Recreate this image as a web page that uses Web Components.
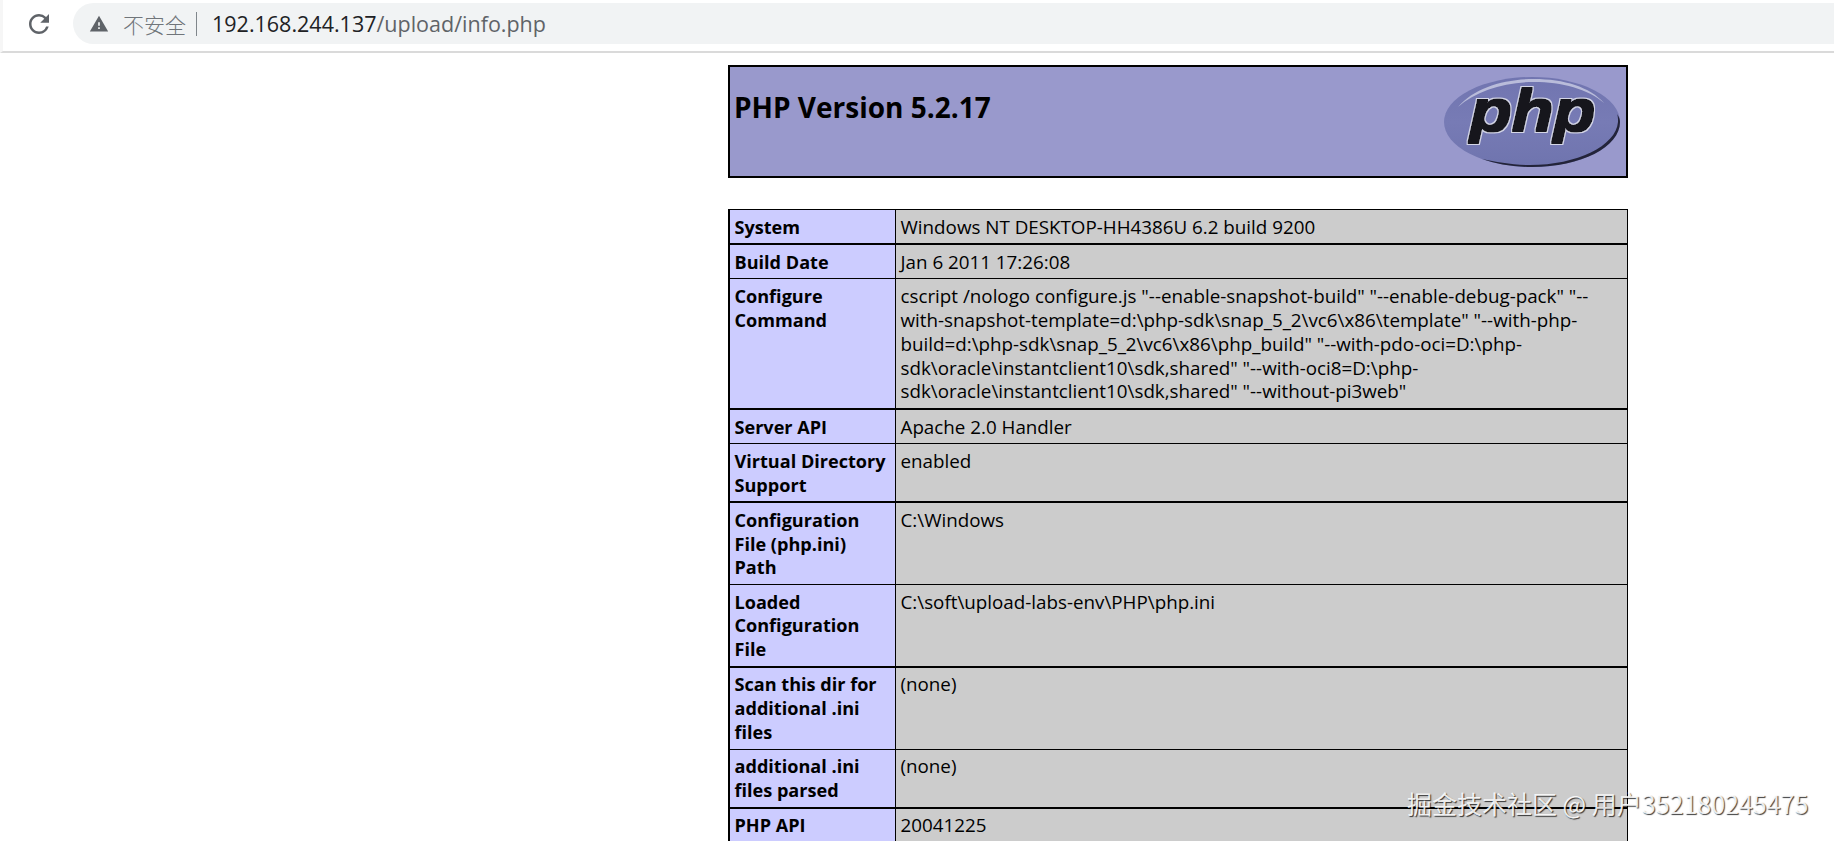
<!DOCTYPE html>
<html lang="zh">
<head>
<meta charset="utf-8">
<title>phpinfo()</title>
<style>
  html, body { margin: 0; height: 100%; overflow: hidden; background: #fff; }
  body { font-family: "Open Sans", "Noto Sans CJK SC", sans-serif; color: #000; }
  .page { padding: 12px 0 0 728px; }
</style>
</head>
<body>
<browser-bar host="192.168.244.137" path="/upload/info.php"></browser-bar>
<div class="page">
  <php-banner version="PHP Version 5.2.17"></php-banner>
  <info-table>
    <info-row label="System" thick>Windows NT DESKTOP-HH4386U 6.2 build 9200</info-row>
    <info-row label="Build Date">Jan 6 2011 17:26:08</info-row>
    <info-row label="Configure Command" thick>cscript /nologo configure.js "--enable-snapshot-build" "--enable-debug-pack" "--with-snapshot-template=d:\php-sdk\snap_5_2\vc6\x86\template" "--with-php-build=d:\php-sdk\snap_5_2\vc6\x86\php_build" "--with-pdo-oci=D:\php-sdk\oracle\instantclient10\sdk,shared" "--with-oci8=D:\php-sdk\oracle\instantclient10\sdk,shared" "--without-pi3web"</info-row>
    <info-row label="Server API">Apache 2.0 Handler</info-row>
    <info-row label="Virtual Directory Support" thick>enabled</info-row>
    <info-row label="Configuration File (php.ini) Path">C:\Windows</info-row>
    <info-row label="Loaded Configuration File" thick>C:\soft\upload-labs-env\PHP\php.ini</info-row>
    <info-row label="Scan this dir for additional .ini files">(none)</info-row>
    <info-row label="additional .ini files parsed" thick>(none)</info-row>
    <info-row label="PHP API">20041225</info-row>
  </info-table>
</div>
<site-watermark>掘金技术社区 @ 用户352180245475</site-watermark>

<script>
class BrowserBar extends HTMLElement {
  constructor() {
    super();
    this.attachShadow({ mode: 'open' });
  }

  connectedCallback() {
    this.shadowRoot.innerHTML = `
      <style>
        :host { display: block; height: 53px; box-sizing: border-box; padding-top: 3px; border-bottom: 2px solid #dadada; border-left: 3px solid #f6f6f6; }
        .row { display: flex; align-items: center; height: 41px; }
        .reload { width: 30px; height: 30px; margin: 0 19px 0 21px; fill: #5f6368; flex: none; }
        .pill { flex: 1; display: flex; align-items: center; height: 100%; background: #f1f3f4; border-radius: 21px 0 0 21px; padding-left: 16px; font: 21.5px "Open Sans", "Noto Sans CJK SC", sans-serif; white-space: nowrap; }
        .warn { width: 20px; height: 20px; fill: #5f6368; flex: none; }
        .label { color: #70757a; margin-left: 14px; font-family: "Noto Sans CJK SC", sans-serif; font-size: 21px; font-weight: 300; }
        .sep { width: 1px; height: 24px; background: #80868b; margin: 0 15px 0 10px; }
        .host { color: #202124; }
        .path { color: #5f6368; }
      </style>
      <div class="row">
        <svg class="reload" viewBox="0 0 24 24"><path d="M17.65 6.35A7.958 7.958 0 0 0 12 4c-4.42 0-7.99 3.58-7.99 8s3.57 8 7.99 8c3.73 0 6.84-2.55 7.73-6h-2.08A5.99 5.99 0 0 1 12 18c-3.31 0-6-2.69-6-6s2.69-6 6-6c1.66 0 3.14.69 4.22 1.78L13 11h7V4l-2.35 2.35z"/></svg>
        <div class="pill">
          <svg class="warn" viewBox="0 0 24 24"><path d="M1 21h22L12 2 1 21zm12-3h-2v-2h2v2zm0-4h-2v-4h2v4z"/></svg>
          <span class="label">不安全</span><span class="sep"></span>
          <span class="host">${this.getAttribute('host')}</span><span class="path">${this.getAttribute('path')}</span>
        </div>
      </div>
    `;
  }
}

class PhpLogo extends HTMLElement {
  constructor() {
    super();
    this.attachShadow({ mode: 'open' });
    this.shadowRoot.innerHTML = `
      <style>
        :host { display: block; width: 180px; height: 94px; }
        svg { display: block; width: 100%; height: 100%; }
        text { font: italic bold 60px "Liberation Sans", sans-serif; fill: #14141c; filter: url(#heavy); }
      </style>
      <svg viewBox="0 0 180 94">
        <defs>
          <linearGradient id="oval" x1="0" y1="0" x2="0" y2="1">
            <stop offset="0" stop-color="#7175b0"/>
            <stop offset=".5" stop-color="#777bb5"/>
            <stop offset="1" stop-color="#6f74ae"/>
          </linearGradient>
          <filter id="heavy" x="-10%" y="-10%" width="120%" height="120%">
            <feMorphology in="SourceGraphic" operator="dilate" radius="0.6" result="body"/>
            <feMorphology in="SourceAlpha" operator="dilate" radius="1.6" result="grown"/>
            <feFlood flood-color="#d4d6e6"/>
            <feComposite in2="grown" operator="in" result="halo"/>
            <feMerge><feMergeNode in="halo"/><feMergeNode in="body"/></feMerge>
          </filter>
        </defs>
        <ellipse cx="90" cy="47" rx="88" ry="45" fill="url(#oval)"/>
        <path d="M16 32C32 13 62 4 92 4c30 0 56 8 70 24C146 14 120 7 92 7 62 7 34 16 16 32z" fill="#b9bcda"/>
        <path d="M178 47c0 25-39 45-88 45-19 0-36-3-50-8 14 3 30 6 48 6 47 0 86-19 88-43 0-3 0-6-1-8 2 3 3 5 3 8z" fill="#23243a"/>
        <text transform="translate(28 56) scale(1.14 1)">php</text>
      </svg>
    `;
  }
}

class PhpBanner extends HTMLElement {
  constructor() {
    super();
    this.attachShadow({ mode: 'open' });
  }

  connectedCallback() {
    this.shadowRoot.innerHTML = `
      <style>
        :host { display: flex; justify-content: space-between; box-sizing: border-box; width: 900px; height: 113px; margin-bottom: 31px; background: #9999cc; border: 2px solid #000; }
        h1 { margin: 20px 0 0 4px; font-size: 28px; line-height: 40px; font-weight: 700; }
        php-logo { margin: 8px 4px 0 0; }
      </style>
      <h1>${this.getAttribute('version')}</h1>
      <php-logo></php-logo>
    `;
  }
}

class InfoTable extends HTMLElement {
  constructor() {
    super();
    this.attachShadow({ mode: 'open' });
    this.shadowRoot.innerHTML = `
      <style>
        :host { display: block; box-sizing: border-box; width: 900px; border: solid #000; border-width: 1px 1px 0 2px; font-size: 18.8px; line-height: 23.9px; }
      </style>
      <slot></slot>
    `;
  }
}

class InfoRow extends HTMLElement {
  constructor() {
    super();
    this.attachShadow({ mode: 'open' });
  }

  connectedCallback() {
    this.shadowRoot.innerHTML = `
      <style>
        :host { display: grid; grid-template-columns: 166px 1fr; border-bottom: 1px solid #000; }
        :host([thick]) { border-bottom-width: 2px; }
        .e { background: #ccccff; font-size: 18.1px; font-weight: 700; padding: 5.6px 8px 3.6px 4.5px; border-right: 1px solid #000; }
        .v { background: #cccccc; padding: 5.6px 6px 3.6px 4.5px; overflow-wrap: anywhere; }
      </style>
      <div class="e">${this.getAttribute('label')}</div>
      <div class="v"><slot></slot></div>
    `;
  }
}

class SiteWatermark extends HTMLElement {
  constructor() {
    super();
    this.attachShadow({ mode: 'open' });
    this.shadowRoot.innerHTML = `
      <style>
        :host { position: absolute; left: 1407px; top: 785px; font: 25px/36px "Noto Sans CJK SC", sans-serif; white-space: nowrap; color: rgba(255,255,255,.9); text-shadow: 1px 1px 1px rgba(0,0,0,.75); }
      </style>
      <slot></slot>
    `;
  }
}

customElements.define('browser-bar', BrowserBar);
customElements.define('php-logo', PhpLogo);
customElements.define('php-banner', PhpBanner);
customElements.define('info-table', InfoTable);
customElements.define('info-row', InfoRow);
customElements.define('site-watermark', SiteWatermark);
</script>
</body>
</html>
